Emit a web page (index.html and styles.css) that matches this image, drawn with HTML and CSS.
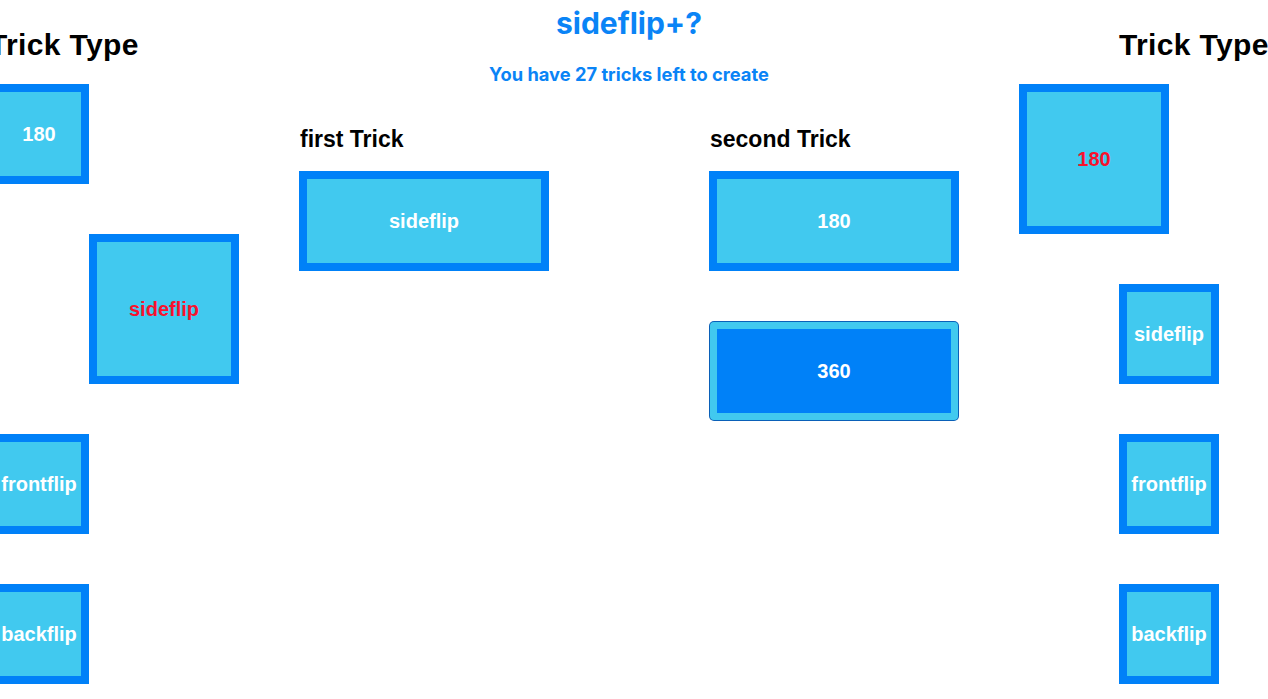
FILE: index.html
```html
<!DOCTYPE html>
<html>
<head>
<meta charset="utf-8">
<link rel="stylesheet" href="styles.css">
</head>
<body>
<div class="page">
  <section class="side side-left">
    <h2 class="side-title">Trick Type</h2>
    <div class="stack">
      <div class="tile small">180</div>
      <div class="tile big shift-right picked">sideflip</div>
      <div class="tile small">frontflip</div>
      <div class="tile small">backflip</div>
    </div>
  </section>

  <main class="center">
    <h1 class="title">sideflip+?</h1>
    <p class="subtitle">You have 27 tricks left to create</p>
    <div class="tricks">
      <div class="trick-col">
        <h3 class="trick-label">first Trick</h3>
        <div class="stack">
          <div class="tile wide">sideflip</div>
        </div>
      </div>
      <div class="trick-col">
        <h3 class="trick-label">second Trick</h3>
        <div class="stack">
          <div class="tile wide">180</div>
          <div class="tile wide active">360</div>
        </div>
      </div>
    </div>
  </main>

  <section class="side side-right">
    <h2 class="side-title">Trick Type</h2>
    <div class="stack">
      <div class="tile big picked">180</div>
      <div class="tile small shift-right">sideflip</div>
      <div class="tile small shift-right">frontflip</div>
      <div class="tile small shift-right">backflip</div>
    </div>
  </section>
</div>
</body>
</html>
```
FILE: styles.css
```css
html, body {
  margin: 0;
  padding: 0;
  background: #ffffff;
}
body {
  width: 1268px;
  height: 699px;
  overflow: hidden;
  font-family: "Liberation Sans", Arial, sans-serif;
}
.page {
  display: grid;
  grid-template-columns: 250px 780px 250px;
  width: 1280px;
  margin-left: -11px;
}
.side {
  display: flex;
  flex-direction: column;
  align-items: flex-start;
}
.side-title {
  margin: 27px 0 21px;
  font-size: 30px;
  line-height: 36px;
  font-weight: 700;
  letter-spacing: 0.35px;
  color: #000;
  white-space: nowrap;
}
.side-left .side-title { margin-left: 0; }
.side-right .side-title { margin-left: 100px; }
.stack {
  display: flex;
  flex-direction: column;
  align-items: flex-start;
  gap: 50px;
}
.tile {
  box-sizing: border-box;
  display: flex;
  align-items: center;
  justify-content: center;
  background: #41c9ef;
  border: 8px solid #0081f8;
  color: #ffffff;
  font-weight: 700;
  font-size: 20px;
  white-space: nowrap;
}
.small { width: 100px; height: 100px; }
.big { width: 150px; height: 150px; }
.wide { width: 250px; height: 100px; }
.shift-right { margin-left: 100px; }
.picked { color: #f9112c; }
.active {
  background: #0081f8;
  border: 7px solid #41c9ef;
  border-radius: 4px;
  box-shadow: 0 0 0 1px #0a60b8;
  width: 248px;
  height: 98px;
  margin: 1px;
}
.center {
  display: flex;
  flex-direction: column;
  align-items: center;
}
.title {
  margin: 5px 0 0;
  font-family: Inter, "Liberation Sans", sans-serif;
  font-size: 30px;
  line-height: 36px;
  font-weight: 700;
  color: #0a84f6;
}
.subtitle {
  margin: 22px 0 0;
  font-family: Inter, "Liberation Sans", sans-serif;
  font-size: 18.3px;
  line-height: 22px;
  font-weight: 700;
  color: #0a84f6;
}
.tricks {
  display: flex;
  gap: 160px;
  align-self: stretch;
  padding: 0 60px;
  margin-top: 41px;
}
.trick-col {
  width: 250px;
  display: flex;
  flex-direction: column;
}
.trick-label {
  margin: 0 0 19px 1px;
  font-size: 23px;
  line-height: 26px;
  font-weight: 700;
  color: #000;
}
```
